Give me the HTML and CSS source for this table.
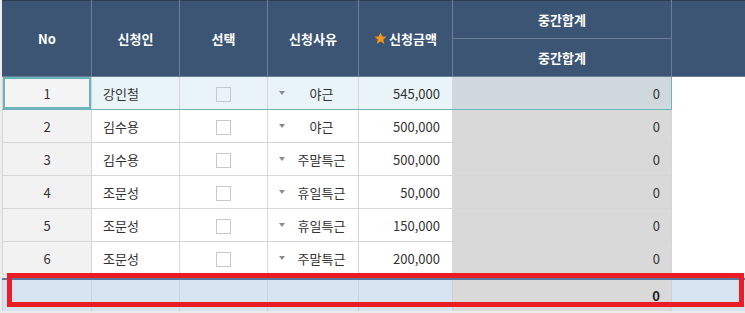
FILE: index.html
```html
<!DOCTYPE html>
<html lang="ko">
<head>
<meta charset="utf-8">
<link rel="stylesheet" href="styles.css">
</head>
<body>
<div class="grid">
  <table class="tbl">
    <colgroup>
      <col class="c-no"><col class="c-name"><col class="c-sel"><col class="c-reason"><col class="c-amt"><col class="c-sub"><col class="c-fill">
    </colgroup>
    <thead>
      <tr class="h1">
        <th rowspan="2">No</th>
        <th rowspan="2">신청인</th>
        <th rowspan="2">선택</th>
        <th rowspan="2">신청사유</th>
        <th rowspan="2"><span class="star"><svg width="13" height="13" viewBox="0 0 24 24"><path d="M12 1l3.2 7.3 7.8.6-6 5.1 1.9 7.8L12 17.6l-6.9 4.2 1.9-7.8-6-5.1 7.8-.6z" fill="#f5961e"/></svg></span>신청금액</th>
        <th class="sub-top">중간합계</th>
        <th rowspan="2" class="fill-h"></th>
      </tr>
      <tr class="h2">
        <th>중간합계</th>
      </tr>
    </thead>
    <tbody>
      <tr class="row sel">
        <td class="no focus">1</td>
        <td class="name">강인철</td>
        <td class="chk"><span class="box"></span></td>
        <td class="reason"><span class="dd"><span class="tri"></span><span class="rtext">야근</span></span></td>
        <td class="amt">545,000</td>
        <td class="sub">0</td>
        <td class="fill"></td>
      </tr>
      <tr class="row">
        <td class="no">2</td>
        <td class="name">김수용</td>
        <td class="chk"><span class="box"></span></td>
        <td class="reason"><span class="dd"><span class="tri"></span><span class="rtext">야근</span></span></td>
        <td class="amt">500,000</td>
        <td class="sub">0</td>
        <td class="fill"></td>
      </tr>
      <tr class="row">
        <td class="no">3</td>
        <td class="name">김수용</td>
        <td class="chk"><span class="box"></span></td>
        <td class="reason"><span class="dd"><span class="tri"></span><span class="rtext">주말특근</span></span></td>
        <td class="amt">500,000</td>
        <td class="sub">0</td>
        <td class="fill"></td>
      </tr>
      <tr class="row">
        <td class="no">4</td>
        <td class="name">조문성</td>
        <td class="chk"><span class="box"></span></td>
        <td class="reason"><span class="dd"><span class="tri"></span><span class="rtext">휴일특근</span></span></td>
        <td class="amt">50,000</td>
        <td class="sub">0</td>
        <td class="fill"></td>
      </tr>
      <tr class="row">
        <td class="no">5</td>
        <td class="name">조문성</td>
        <td class="chk"><span class="box"></span></td>
        <td class="reason"><span class="dd"><span class="tri"></span><span class="rtext">휴일특근</span></span></td>
        <td class="amt">150,000</td>
        <td class="sub">0</td>
        <td class="fill"></td>
      </tr>
      <tr class="row">
        <td class="no">6</td>
        <td class="name">조문성</td>
        <td class="chk"><span class="box"></span></td>
        <td class="reason"><span class="dd"><span class="tri"></span><span class="rtext">주말특근</span></span></td>
        <td class="amt">200,000</td>
        <td class="sub">0</td>
        <td class="fill"></td>
      </tr>
    </tbody>
  </table>
  <table class="tbl foot">
    <colgroup>
      <col class="c-no"><col class="c-name"><col class="c-sel"><col class="c-reason"><col class="c-amt"><col class="c-sub"><col class="c-fill">
    </colgroup>
    <tbody>
      <tr class="frow">
        <td></td><td></td><td></td><td></td><td></td><td class="fsub">0</td><td class="ffill"></td>
      </tr>
    </tbody>
  </table>
  <div class="mark"></div>
</div>
</body>
</html>
```

FILE: styles.css
```css
* { box-sizing: border-box; }
html, body { margin: 0; padding: 0; background: #ffffff; }
body {
  font-family: "Noto Sans CJK KR", "Noto Sans", sans-serif;
  font-size: 13px;
  color: #333333;
  width: 745px;
  height: 313px;
  overflow: hidden;
}
.grid {
  position: relative;
  padding-left: 2px;
  background: #ececec;
  height: 313px;
}
.tbl {
  border-collapse: collapse;
  table-layout: fixed;
  width: 743px;
  background: #ffffff;
}
.c-no { width: 89px; }
.c-name { width: 88px; }
.c-sel { width: 88px; }
.c-reason { width: 91px; }
.c-amt { width: 94px; }
.c-sub { width: 219px; }
.c-fill { width: 74px; }

thead th {
  background: #3c5574;
  color: #ffffff;
  font-weight: 700;
  font-size: 13px;
  border: 1px solid #6b7e95;
  border-top: 1px solid #2b3d53;
  padding: 0;
  text-align: center;
  white-space: nowrap;
}
thead th:first-child { border-left-color: #3c5574; }
.h1 th { height: 38px; }
.h2 th { height: 38px; border-top: 1px solid #6b7e95; }
.fill-h { border-right-color: #3c5574 !important; }
.star { display: inline-block; vertical-align: -1px; margin-right: 2px; }
.star svg { display: block; }

.row td {
  height: 33px;
  border: 1px solid #d6d6d6;
  padding: 0;
  white-space: nowrap;
}
.no { background: #f2f2f2; text-align: center; }
.name { text-align: left; padding-left: 11px !important; }
.chk { text-align: center; }
.box {
  display: inline-block;
  width: 15px;
  height: 15px;
  border: 1px solid #c8c8c8;
  vertical-align: middle;
}
.dd { display: flex; align-items: center; padding-left: 11px; }
.tri {
  width: 0;
  height: 0;
  border-left: 3.5px solid transparent;
  border-right: 3.5px solid transparent;
  border-top: 4px solid #8c8c8c;
}
.rtext { flex: 1; text-align: center; }
.amt { text-align: right; padding-right: 12px !important; }
.sub { background: #d9d9d9; text-align: right; padding-right: 11px !important; }
.row td.fill { background: #ffffff; border: none; border-left: 1px solid #d6d6d6; }

.sel td { background: #e9f4f9; border-top: 1px solid #6db3ba; border-bottom: 1px solid #6db3ba; }
.sel td.no { background: #f4f4f4; }
.sel td.sub { background: #ced8dd; border-right: 1px solid #6db3ba; }
.sel td.fill { background: #ffffff; border-top: none; border-bottom: none; border-left: 1px solid #6db3ba; }
.sel td.focus { box-shadow: inset 0 0 0 2px #6db3ba; }

.foot { margin-top: 3px; background: #d7e3f0; }
.frow td {
  height: 32px;
  border-top: 2px solid #5a77a0;
  border-left: 1px solid #c9d1da;
  border-right: 1px solid #c9d1da;
  background: #d7e3f0;
  padding: 0 0 1px 0;
}
.frow td.fsub {
  background: #d9d9d9;
  text-align: right;
  padding-right: 11px;
  font-weight: 700;
  color: #222;
}

.mark {
  position: absolute;
  left: 7px;
  top: 273px;
  width: 737px;
  height: 34px;
  border: 5px solid #ea1c24;
}
```
